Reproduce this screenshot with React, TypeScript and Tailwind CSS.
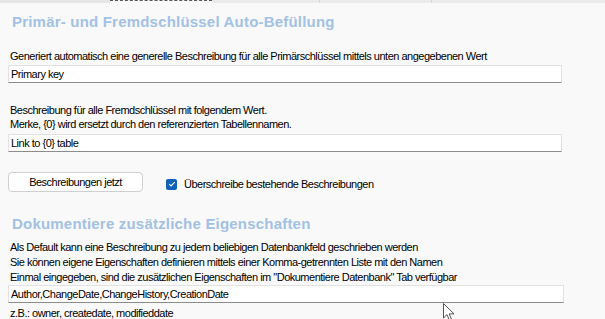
import React from 'react';

const TextBox: React.FC<{ value: string; width: string }> = ({ value, width }) => (
  <div
    className={`${width} h-[18px] ml-[8px] bg-white border border-[#e2e2e2] border-b-[#8c8c8c] flex items-center pl-[2px] text-[11px] text-black`}
  >
    {value}
  </div>
);

const Heading: React.FC<{ children: React.ReactNode }> = ({ children }) => (
  <h2 className="ml-[12px] text-[15px] leading-[17px] font-bold text-[#a3c1e4] tracking-[0.2px]">{children}</h2>
);

const App: React.FC = () => {
  return (
    <div
      className="relative w-[605px] h-[319px] overflow-hidden bg-[#f9f9f9] text-black"
      style={{ fontFamily: '"Liberation Sans", Arial, sans-serif' }}
    >
      {/* tab strip remnant */}
      <div className="flex h-[3px]">
        <div className="w-[110px] bg-[#e6e6e6]" />
        <div className="w-[102px] border-t border-dashed border-[#555]" />
        <div className="flex-1 flex bg-[#ebebeb]">
          <div className="w-[108px] border-r border-[#d6d6d6]" />
          <div className="w-[112px] border-r border-[#d6d6d6]" />
        </div>
      </div>

      <div className="flex flex-col text-[11px] leading-[15px] tracking-[-0.5px]">
        <div className="mt-[10px]">
          <Heading>Primär- und Fremdschlüssel Auto-Befüllung</Heading>
        </div>

        <p className="mt-[19px] ml-[10px]">
          Generiert automatisch eine generelle Beschreibung für alle Primärschlüssel mittels unten angegebenen Wert
        </p>
        <div className="mt-[1px]">
          <TextBox value="Primary key" width="w-[554px]" />
        </div>

        <div className="mt-[20px] ml-[10px] leading-[14px]">
          <p>Beschreibung für alle Fremdschlüssel mit folgendem Wert.</p>
          <p>Merke, {'{0}'} wird ersetzt durch den referenzierten Tabellennamen.</p>
        </div>
        <div className="mt-[3px]">
          <TextBox value="Link to {0} table" width="w-[554px]" />
        </div>

        <div className="mt-[20px] flex items-center">
          <button className="ml-[8px] w-[135px] h-[20px] bg-white border border-[#cfcfcf] rounded-[4px] text-[11px] leading-none tracking-[-0.5px]">
            Beschreibungen jetzt
          </button>
          <div className="ml-[23px] mt-[4px] flex items-center">
            <span className="w-[11px] h-[11px] rounded-[2px] bg-[#0f62b8] flex items-center justify-center">
              <svg width="8" height="8" viewBox="0 0 8 8" fill="none">
                <path d="M1.3 4.2 L3.1 5.9 L6.7 2.2" stroke="white" strokeWidth="1.1" />
              </svg>
            </span>
            <span className="ml-[7px]">Überschreibe bestehende Beschreibungen</span>
          </div>
        </div>

        <div className="mt-[23px]">
          <Heading>Dokumentiere zusätzliche Eigenschaften</Heading>
        </div>

        <div className="mt-[8px] ml-[10px]">
          <p>Als Default kann eine Beschreibung zu jedem beliebigen Datenbankfeld geschrieben werden</p>
          <p>Sie können eigene Eigenschaften definieren mittels einer Komma-getrennten Liste mit den Namen</p>
          <p>Einmal eingegeben, sind die zusätzlichen Eigenschaften im "Dokumentiere Datenbank" Tab verfügbar</p>
        </div>
        <TextBox value="Author,ChangeDate,ChangeHistory,CreationDate" width="w-[556px]" />
        <p className="mt-[3px] ml-[10px]">z.B.: owner, createdate, modifieddate</p>
      </div>

      {/* mouse pointer */}
      <svg className="absolute left-[443px] top-[303px]" width="14" height="20" viewBox="0 0 14 20">
        <path d="M0.5 0.5 L0.5 15 L4 11.6 L6.3 17 L8.4 16.1 L6.2 10.9 L11 10.9 Z" fill="white" stroke="#555" strokeWidth="1" />
      </svg>
    </div>
  );
};

export default App;
